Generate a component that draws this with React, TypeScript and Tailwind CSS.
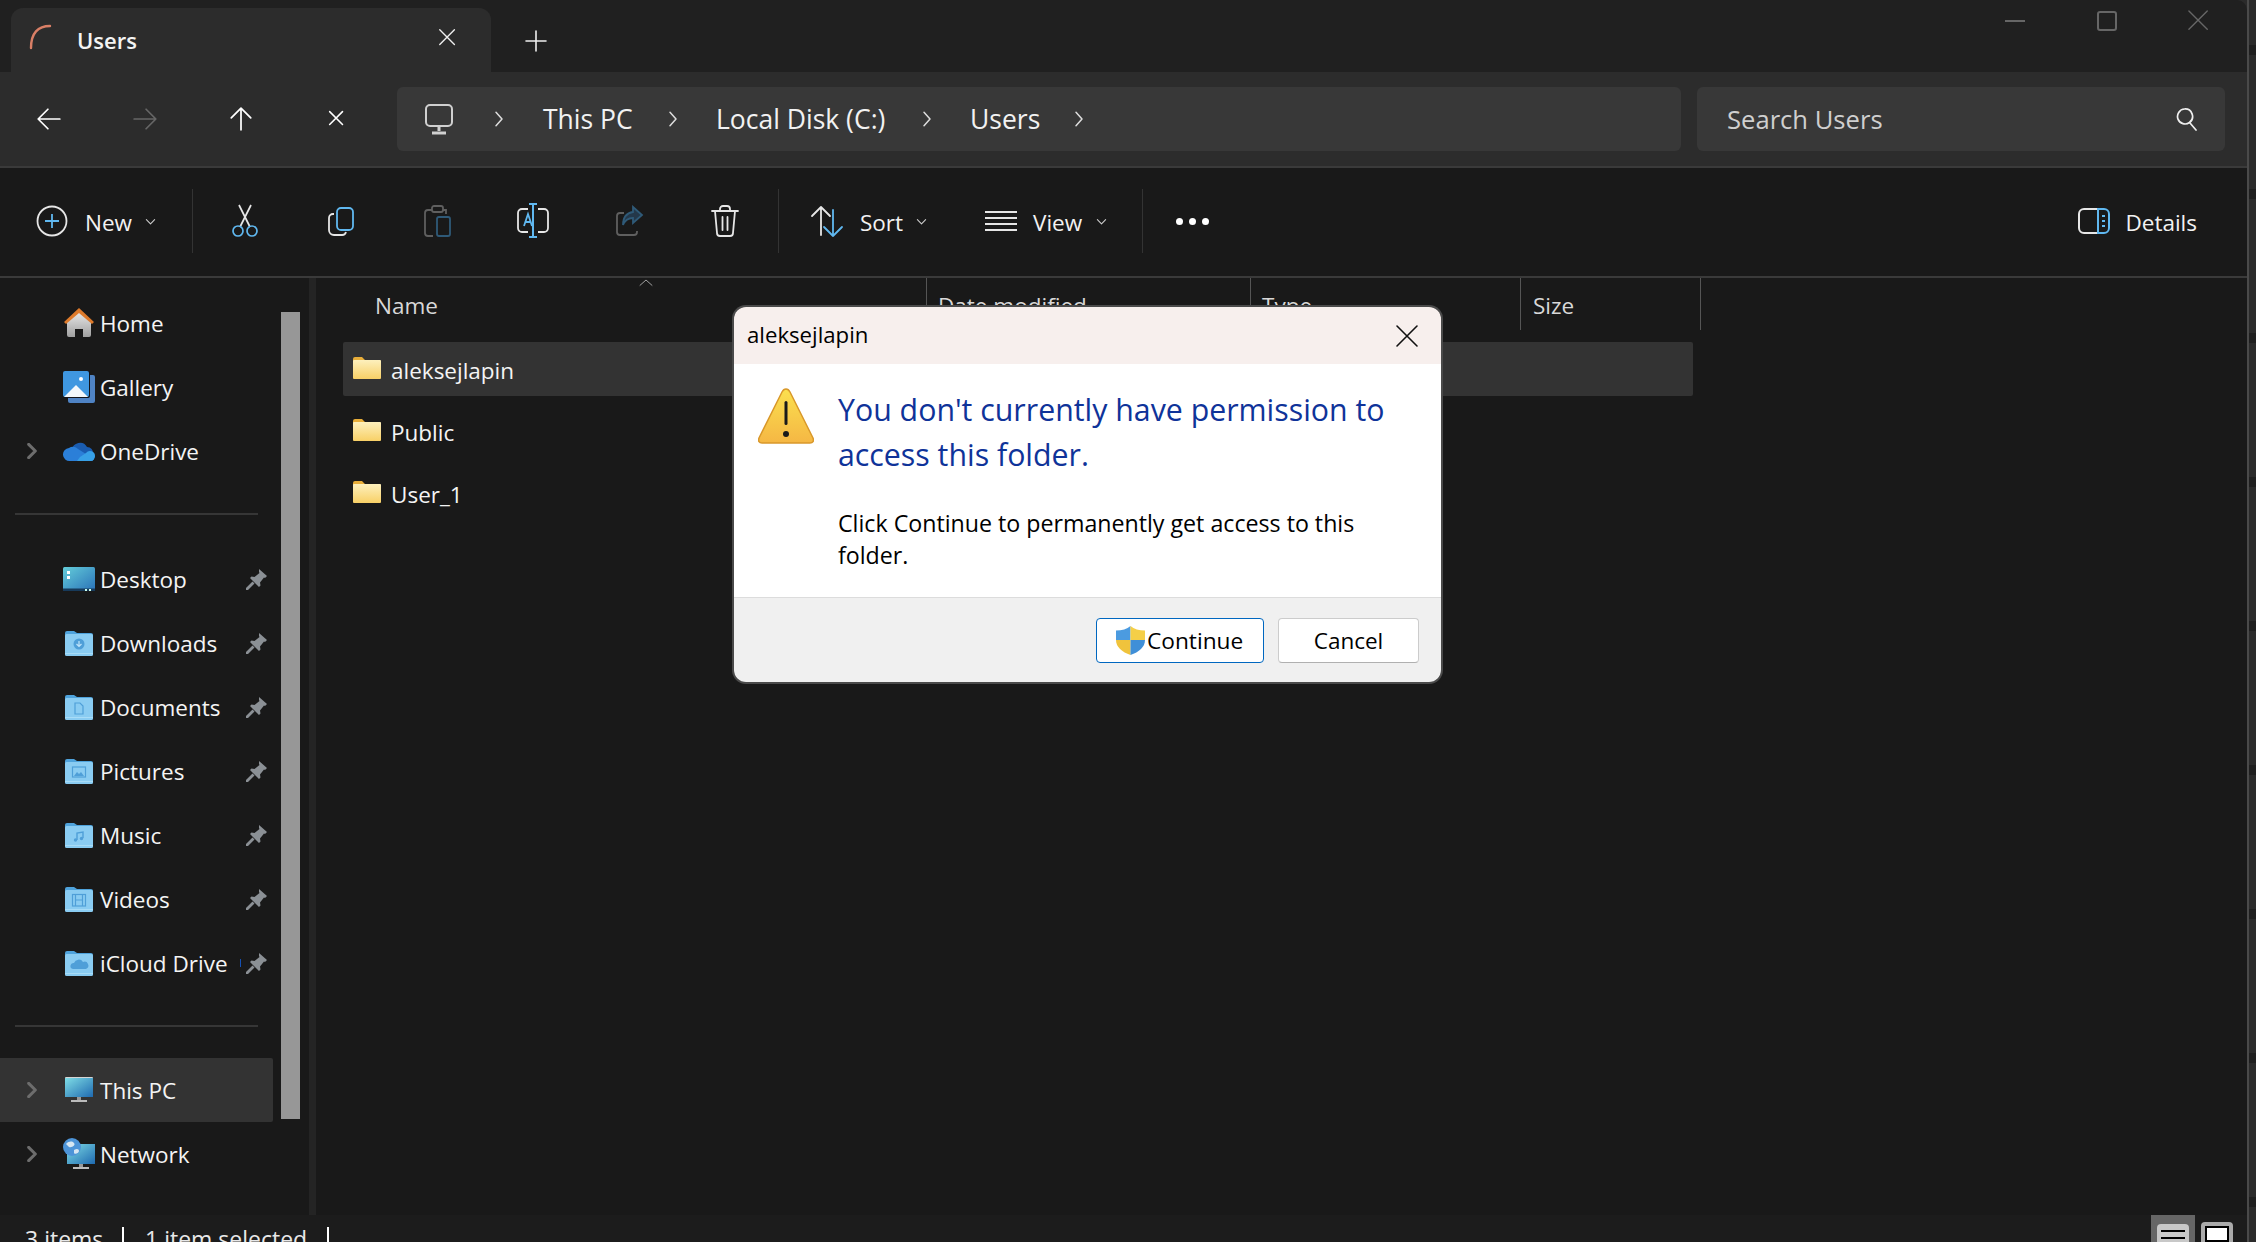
import React from "react";

const Line = ({ d, c = "#fff", w = 1.6, s = 24 }: { d: string; c?: string; w?: number; s?: number }) => (
  <svg width={s} height={s} viewBox="0 0 24 24" fill="none" stroke={c} strokeWidth={w} strokeLinecap="round" strokeLinejoin="round">
    <path d={d} />
  </svg>
);

const Chevron = ({ c = "#ddd" }: { c?: string }) => <Line s={18} c={c} w={2} d="M8 3l8 9-8 9" />;
const Small = () => <Line s={11} c="#ccc" w={2.4} d="M3 8l9 9 9-9" />;

const Slot = ({ w, children }: { w: string; children: React.ReactNode }) => (
  <div className={`${w} flex items-center justify-center shrink-0`}>{children}</div>
);

const Spinner = () => (
  <svg width="24" height="26" viewBox="0 0 24 26" fill="none" stroke="#d97f66" strokeWidth="2.4" strokeLinecap="round">
    <path d="M22 2C10 2 3 9 3 24" />
  </svg>
);

const Monitor = () => (
  <svg width="30" height="32" viewBox="0 0 30 32" fill="none" stroke="#d0d0d0" strokeWidth="2">
    <rect x="2" y="2" width="26" height="21" rx="4" />
    <path d="M15 23v5M8 30h14" strokeWidth="3" />
  </svg>
);

const Sep = () => <div className="w-[1px] h-[64px] bg-[#333333] shrink-0" />;

const Cut = () => (
  <svg width="28" height="34" viewBox="0 0 28 34" fill="none" strokeWidth="1.7">
    <path d="M20 1L9 23M8 1l11 22" stroke="#e6e6e6" />
    <circle cx="7" cy="27" r="5" stroke="#60b8f0" />
    <circle cx="21" cy="27" r="5" stroke="#60b8f0" />
  </svg>
);
const Copy = () => (
  <svg width="30" height="30" viewBox="0 0 30 30" fill="none" strokeWidth="1.8">
    <rect x="11" y="2" width="16" height="22" rx="4" stroke="#60b8f0" />
    <path d="M8 8H7a4 4 0 0 0-4 4v12a5 5 0 0 0 5 5h8a4 4 0 0 0 4-3" stroke="#e6e6e6" />
  </svg>
);
const Paste = () => (
  <svg width="30" height="34" viewBox="0 0 30 34" fill="none" strokeWidth="1.8">
    <path d="M10 6H6a3 3 0 0 0-3 3v20a3 3 0 0 0 3 3h5M21 6h3v4" stroke="#5f5f5f" />
    <rect x="10" y="2" width="11" height="6" rx="2" stroke="#5f5f5f" />
    <rect x="15" y="13" width="13" height="19" rx="2" stroke="#2f5a78" />
  </svg>
);
const Rename = () => (
  <svg width="34" height="36" viewBox="0 0 34 36" fill="none" strokeWidth="1.8">
    <path d="M12 6H6a4 4 0 0 0-4 4v15a4 4 0 0 0 4 4h6M22 6h6a4 4 0 0 1 4 4v15a4 4 0 0 1-4 4h-6" stroke="#e6e6e6" />
    <path d="M13 1h8M17 1v33M13 34h8" stroke="#60b8f0" strokeWidth="2" />
    <path d="M8 23l4-12 4 12M9.5 19h5" stroke="#60b8f0" />
  </svg>
);
const Share = () => (
  <svg width="30" height="34" viewBox="0 0 30 34" fill="none" strokeWidth="1.8">
    <path d="M10 9H6a3 3 0 0 0-3 3v16a3 3 0 0 0 3 3h14a3 3 0 0 0 3-3v-1" stroke="#5f5f5f" />
    <path d="M19 3l9 8-9 8v-5c-5 0-8 2-10 7 0-7 3-12 10-13V3z" stroke="#2f5a78" fill="#24384a" />
  </svg>
);
const Trash = () => (
  <svg width="30" height="34" viewBox="0 0 30 34" fill="none" stroke="#e6e6e6" strokeWidth="1.8" strokeLinecap="round">
    <path d="M2 7h26M10 7V5a3 3 0 0 1 3-3h4a3 3 0 0 1 3 3v2M5 7l2 22a3 3 0 0 0 3 3h10a3 3 0 0 0 3-3l2-22M12.500 13v13M17.500 13v13" />
  </svg>
);
const SortIcon = () => (
  <svg width="34" height="34" viewBox="0 0 34 34" fill="none" strokeWidth="1.8" strokeLinecap="round" strokeLinejoin="round">
    <path d="M11 31V3M2 12l9-9 9 9" stroke="#e6e6e6" />
    <path d="M23 6v26M14 23l9 9 9-9" stroke="#60b8f0" />
  </svg>
);
const ViewIcon = () => (
  <svg width="34" height="24" viewBox="0 0 34 24" fill="none" stroke="#e6e6e6" strokeWidth="2">
    <path d="M1 3h32M1 9h32M1 15h32M1 21h32" />
  </svg>
);
const DetailsIcon = () => (
  <svg width="32" height="26" viewBox="0 0 32 26" fill="none" strokeWidth="2">
    <path d="M20 1H6a5 5 0 0 0-5 5v14a5 5 0 0 0 5 5h14" stroke="#e6e6e6" />
    <path d="M20 1h6a5 5 0 0 1 5 5v14a5 5 0 0 1-5 5h-6V1z" stroke="#60b8f0" />
    <path d="M24 8h3M24 13h3M24 18h3" stroke="#60b8f0" />
  </svg>
);
const NewIcon = () => (
  <svg width="32" height="32" viewBox="0 0 32 32" fill="none" strokeWidth="1.8">
    <circle cx="16" cy="16" r="14.500" stroke="#e6e6e6" />
    <path d="M16 9v14M9 16h14" stroke="#60b8f0" />
  </svg>
);

const Home = () => (
  <svg width="32" height="32" viewBox="0 0 32 32">
    <defs>
      <linearGradient id="hb" x1="0" y1="0" x2="0" y2="1">
        <stop offset="0" stopColor="#e8e8e8" />
        <stop offset="1" stopColor="#a0a0a0" />
      </linearGradient>
    </defs>
    <path d="M4 15L16 5l12 10v13a2 2 0 0 1-2 2h-6v-8h-8v8H6a2 2 0 0 1-2-2z" fill="url(#hb)" />
    <path d="M1 15L16 1l15 14-2 2L16 6 3 17z" fill="#dd7a2b" />
  </svg>
);
const Gallery = () => (
  <svg width="32" height="32" viewBox="0 0 32 32">
    <rect x="5" y="4" width="27" height="28" rx="2" fill="#4f83c4" />
    <rect x="0" y="0" width="27" height="27" rx="2" fill="#10131a" />
    <rect x="0" y="0" width="26" height="26" rx="2" fill="#3f97e0" />
    <path d="M1 26l12-12 12 12z" fill="#f2f7fb" />
    <circle cx="18" cy="8" r="2" fill="#fff" />
  </svg>
);
const OneDrive = () => (
  <svg width="32" height="22" viewBox="0 0 32 22">
    <path d="M9 10a8 8 0 0 1 15-3 6 6 0 0 1 6 7H9z" fill="#1a5cb0" />
    <path d="M7 21a6.500 6.500 0 0 1-1-13 7 7 0 0 1 9 1l8 5 9 2c-.5 3-2 5-4 5z" fill="#2b7fd8" />
    <path d="M14 21h14c2 0 3.500-2 4-5a5 5 0 0 0-9-3l-6 4z" fill="#37a0e6" />
  </svg>
);
const Desktop = () => (
  <svg width="32" height="24" viewBox="0 0 32 24">
    <defs>
      <linearGradient id="db" x1="0" y1="0" x2="1" y2="1">
        <stop offset="0" stopColor="#64cdda" />
        <stop offset="1" stopColor="#2a72b8" />
      </linearGradient>
    </defs>
    <rect width="32" height="24" rx="1.500" fill="url(#db)" />
    <rect y="21.500" width="32" height="2.500" fill="#173a5a" />
    <rect x="4" y="4" width="3" height="3" fill="#fff" />
    <rect x="4" y="9" width="3" height="3" fill="#fff" />
    <rect x="22" y="22" width="2" height="2" fill="#cfe" />
    <rect x="26" y="22" width="2" height="2" fill="#cfe" />
  </svg>
);
const BlueFolder = ({ children }: { children?: React.ReactNode }) => (
  <svg width="28" height="25" viewBox="0 0 28 25">
    <path d="M0 2a2 2 0 0 1 2-2h7l3 2h14a2 2 0 0 1 2 2v6H0z" fill="#4fa3dc" />
    <rect y="3" width="28" height="22" rx="1.500" fill="#8accf2" />
    <rect y="22" width="28" height="1" fill="#a8dcf7" />
    {children}
  </svg>
);
const Pin = () => (
  <svg width="21" height="21" viewBox="0 0 21 21" fill="#8b9095">
    <path d="M13 0l8 7-2 2-1-.5-4 5 .5 3-1.500 1.500L4 9l1.500-1.500 3 .5 5-4-.5-1z" />
    <path d="M6.500 12.500l2 2L2 21H0v-2z" />
  </svg>
);
const PC = () => (
  <svg width="28" height="26" viewBox="0 0 28 26">
    <defs>
      <linearGradient id="pc" x1="0" y1="0" x2="1" y2="1">
        <stop offset="0" stopColor="#7fdde6" />
        <stop offset="1" stopColor="#1f6ab0" />
      </linearGradient>
    </defs>
    <rect width="28" height="20" fill="#d5d5d5" rx="1" />
    <rect width="28" height="19" y="1" fill="url(#pc)" />
    <rect x="12" y="20" width="4" height="3" fill="#999" />
    <rect x="6" y="23" width="16" height="2" fill="#bbb" />
  </svg>
);
const NetworkIcon = () => (
  <svg width="32" height="32" viewBox="0 0 32 32">
    <defs>
      <linearGradient id="nw" x1="0" y1="0" x2="1" y2="1">
        <stop offset="0" stopColor="#7fdde6" />
        <stop offset="1" stopColor="#1f6ab0" />
      </linearGradient>
    </defs>
    <rect x="4" y="6" width="28" height="20" fill="url(#nw)" />
    <rect x="16" y="26" width="4" height="3" fill="#999" />
    <rect x="10" y="29" width="16" height="2" fill="#bbb" />
    <circle cx="9" cy="9" r="9" fill="#4d94d8" />
    <path d="M3 6c3-3 6-3 8-1s-2 5-5 4zM11 12c3-2 5-1 5 1s-4 4-5 2z" fill="#d6e6f2" />
  </svg>
);

const Row = ({ icon, label, chevron, pin, active, clip }: { icon: React.ReactNode; label: string; chevron?: boolean; pin?: boolean; active?: boolean; clip?: boolean }) => (
  <div className={`h-[64px] w-[273px] flex items-center rounded-r-[2px] ${active ? "bg-[#333333]" : ""}`}>
    <div className="w-[63px] pl-[24px] flex items-center shrink-0">
      {chevron && <Line s={16} c="#6d6d6d" w={4.5} d="M7 2l10 10-10 10" />}
    </div>
    <div className="w-[32px] flex justify-center shrink-0">{icon}</div>
    <span className="ml-[5px] mt-[2px] text-[#f4f4f4] whitespace-nowrap">{label}</span>
    {clip && <span className="ml-auto w-[1px] h-[8px] bg-[#1450b4]" />}
    {pin && <span className={`${clip ? "ml-[5px]" : "ml-auto"} mr-[6px] flex`}><Pin /></span>}
  </div>
);

const YellowFolder = () => (
  <svg width="28" height="22" viewBox="0 0 28 22">
    <defs>
      <linearGradient id="yf" x1="0" y1="0" x2="0" y2="1">
        <stop offset="0" stopColor="#fdf0bd" />
        <stop offset="1" stopColor="#f8d066" />
      </linearGradient>
    </defs>
    <path d="M0 2a2 2 0 0 1 2-2h7l3 3h14a2 2 0 0 1 2 2v4H0z" fill="#e8ae3a" />
    <rect y="3" width="28" height="19" rx="1" fill="url(#yf)" />
  </svg>
);

const FileRow = ({ name, active }: { name: string; active?: boolean }) => (
  <div className={`h-[54px] w-[1350px] mb-[8px] flex items-center pl-[10px] rounded-[2px] ${active ? "bg-[#333333]" : ""}`}>
    <span className="flex -mt-[3px]"><YellowFolder /></span>
    <span className="ml-[10px] mt-[4px] text-[#f4f4f4]">{name}</span>
  </div>
);

const Warning = () => (
  <svg width="56" height="56" viewBox="0 0 56 56">
    <defs>
      <linearGradient id="wg" x1="0" y1="0" x2="0" y2="1">
        <stop offset="0" stopColor="#fbe04f" />
        <stop offset="1" stopColor="#f5b744" />
      </linearGradient>
    </defs>
    <path d="M28 1c2 0 3 1 4 3l23 46c1 3 0 5-3 5H4c-3 0-4-2-3-5L24 4c1-2 2-3 4-3z" fill="url(#wg)" stroke="#d9982b" strokeWidth="1.500" />
    <rect x="26.500" y="13" width="3" height="24" rx="1.500" fill="#1a1a1a" />
    <circle cx="28" cy="46" r="3" fill="#1a1a1a" />
  </svg>
);

const Shield = () => (
  <svg width="29" height="29" viewBox="0 0 29 29">
    <path d="M14.500 0C11 3 6 4.500 0 4.500V14h14.500z" fill="#4b9be0" />
    <path d="M14.500 0C18 3 23 4.500 29 4.500V14H14.500z" fill="#f5cf47" />
    <path d="M0 14c0 7 6 12 14.500 15V14z" fill="#f0c33c" />
    <path d="M29 14c0 7-6 12-14.500 15V14z" fill="#3f8fd8" />
  </svg>
);

const stripBars = [0, 1, 2, 3, 4, 5, 6, 7, 8];

export default function App() {
  return (
    <div className="relative w-[2256px] h-[1242px] overflow-hidden flex bg-[#2b2b2b] font-['Open_Sans',sans-serif] text-[22.5px] leading-none text-white">
      <div className="w-[2247px] h-full flex flex-col shrink-0 rounded-tr-[10px] overflow-hidden">
        {/* Tabs */}
        <div className="h-[72px] bg-[#202020] flex items-end pl-[11px] shrink-0 relative">
          <div className="w-[480px] h-[64px] bg-[#2c2c2c] rounded-t-[12px] flex items-center pl-[17px] pb-[3px]">
            <span className="flex -mt-[4px]"><Spinner /></span>
            <span className="ml-[25px] mt-[2px] font-semibold text-[22px] text-[#f4f4f4]">Users</span>
            <span className="ml-auto mr-[32px] flex -mt-[2px]"><Line s={22} d="M3 3l16 16M19 3L3 19" c="#eee" w={1.5} /></span>
          </div>
          <div className="ml-[33px] pb-[19px] flex"><Line s={24} c="#eee" w={1.6} d="M12 2v20M2 12h20" /></div>
          <div className="ml-auto self-start mt-[10px] mr-[2px] flex items-center">
            <Slot w="w-[92px]"><div className="w-[20px] h-[2px] bg-[#666666]" /></Slot>
            <Slot w="w-[92px]"><div className="w-[20px] h-[20px] border-2 border-[#666666] rounded-[3px]" /></Slot>
            <Slot w="w-[92px]"><Line s={22} d="M1 1l20 20M21 1L1 21" c="#666666" w={1.5} /></Slot>
          </div>
        </div>

        {/* Address */}
        <div className="h-[96px] bg-[#2c2c2c] border-b-2 border-[#3a3a3a] flex items-center pl-[1px] pb-[1px] shrink-0">
          <Slot w="w-[96px]"><Line s={26} d="M22 12H3M11 3l-9 9 9 9" /></Slot>
          <Slot w="w-[96px]"><Line s={26} c="#666" d="M2 12h19M13 3l9 9-9 9" /></Slot>
          <Slot w="w-[96px]"><Line s={26} d="M12 22V3M3 11l9-9 9 9" /></Slot>
          <Slot w="w-[96px]"><Line s={22} d="M4 4l14 14M18 4L4 18" w={1.7} /></Slot>
          <div className="ml-[12px] w-[1284px] h-[64px] bg-[#383838] rounded-[6px] flex items-center text-[#f2f2f2] text-[26.500px]">
            <span className="ml-[27px] flex"><Monitor /></span>
            <span className="ml-[36px] flex"><Chevron /></span>
            <span className="ml-[35px] mt-[2px] w-[90px] whitespace-nowrap">This PC</span>
            <span className="ml-[31px] flex"><Chevron /></span>
            <span className="ml-[34px] mt-[2px] w-[170px] whitespace-nowrap">Local Disk (C:)</span>
            <span className="ml-[32px] flex"><Chevron /></span>
            <span className="ml-[34px] mt-[2px] w-[67px]">Users</span>
            <span className="ml-[33px] flex"><Chevron /></span>
          </div>
          <div className="ml-[16px] w-[528px] h-[64px] bg-[#383838] rounded-[6px] flex items-center pl-[30px] pr-[26px] justify-between">
            <span className="text-[#cfcfcf] text-[25.600px] mt-[3px]">Search Users</span>
            <Line s={24} c="#eee" w={1.7} d="M14.500 15.500A7.500 7.500 0 1 1 9.500 2a7.500 7.500 0 0 1 5 13.500zM15 16l6 7" />
          </div>
        </div>

        {/* Toolbar */}
        <div className="h-[110px] bg-[#191919] border-b-2 border-[#3a3a3a] flex items-center shrink-0 pb-[2px]">
          <span className="ml-[36px] flex"><NewIcon /></span>
          <span className="ml-[17px] w-[49px] text-[#f2f2f2] mt-[5px]">New</span>
          <span className="ml-[11px] flex"><Small /></span>
          <span className="ml-[36px] flex"><Sep /></span>
          <Slot w="w-[4px]"><span /></Slot>
          <Slot w="w-[96px]"><Cut /></Slot>
          <Slot w="w-[96px]"><Copy /></Slot>
          <Slot w="w-[96px]"><Paste /></Slot>
          <Slot w="w-[96px]"><Rename /></Slot>
          <Slot w="w-[96px]"><Share /></Slot>
          <Slot w="w-[96px]"><Trash /></Slot>
          <span className="ml-[5px] flex"><Sep /></span>
          <span className="ml-[31px] flex"><SortIcon /></span>
          <span className="ml-[16px] w-[44px] text-[#f2f2f2] mt-[5px]">Sort</span>
          <span className="ml-[12px] flex"><Small /></span>
          <span className="ml-[57px] flex"><ViewIcon /></span>
          <span className="ml-[15px] w-[51px] text-[#f2f2f2] mt-[5px]">View</span>
          <span className="ml-[12px] flex"><Small /></span>
          <span className="ml-[35px] flex"><Sep /></span>
          <span className="ml-[33px] flex gap-[6px]">
            <i className="w-[7px] h-[7px] rounded-full bg-white" />
            <i className="w-[7px] h-[7px] rounded-full bg-white" />
            <i className="w-[7px] h-[7px] rounded-full bg-white" />
          </span>
          <span className="ml-auto flex"><DetailsIcon /></span>
          <span className="ml-[15px] mr-[50px] text-[#f2f2f2] mt-[5px]">Details</span>
        </div>

        {/* Body */}
        <div className="flex-1 min-h-0 flex bg-[#191919]">
          <div className="w-[309px] shrink-0 flex">
            <div className="w-[273px] pt-[13px] shrink-0">
              <Row icon={<Home />} label="Home" />
              <Row icon={<Gallery />} label="Gallery" />
              <Row icon={<OneDrive />} label="OneDrive" chevron />
              <div className="mx-[15px] w-[243px] h-[2px] bg-[#363636] mt-[30px] mb-[32px]" />
              <Row icon={<Desktop />} label="Desktop" pin />
              <Row label="Downloads" pin icon={<BlueFolder><circle cx="14" cy="13" r="5.500" fill="#4f9fd8" /><path d="M14 10v5M11.500 13l2.500 2.500 2.500-2.500" stroke="#bfe4fa" strokeWidth="1.200" fill="none" /></BlueFolder>} />
              <Row label="Documents" pin icon={<BlueFolder><path d="M10 8h5l3 3v8h-8z" fill="none" stroke="#4f9fd8" strokeWidth="1.200" /></BlueFolder>} />
              <Row label="Pictures" pin icon={<BlueFolder><rect x="7.500" y="8" width="13" height="10" fill="none" stroke="#4f9fd8" strokeWidth="1.200" /><path d="M9 17l3-4 2 2 2-2 3 4z" fill="#4f9fd8" /></BlueFolder>} />
              <Row label="Music" pin icon={<BlueFolder><path d="M12 17V10l6-1v6" fill="none" stroke="#4f9fd8" strokeWidth="1.400" /><circle cx="10.500" cy="17" r="1.700" fill="#4f9fd8" /><circle cx="16.500" cy="15.500" r="1.700" fill="#4f9fd8" /></BlueFolder>} />
              <Row label="Videos" pin icon={<BlueFolder><rect x="7.500" y="7.500" width="13" height="11.500" fill="none" stroke="#4f9fd8" strokeWidth="1.200" /><path d="M10.500 7.500v11.500M17.500 7.500v11.500M10.500 13h7" stroke="#4f9fd8" strokeWidth="1.200" /></BlueFolder>} />
              <Row label="iCloud Drive" pin clip icon={<BlueFolder><path d="M8 18a3 3 0 0 1 1-6 5 5 0 0 1 9-1 3.500 3.500 0 0 1 3 7z" fill="#4f9fd8" /></BlueFolder>} />
              <div className="mx-[15px] w-[243px] h-[2px] bg-[#363636] mt-[30px] mb-[31px]" />
              <Row icon={<PC />} label="This PC" chevron active />
              <Row icon={<NetworkIcon />} label="Network" chevron />
            </div>
            <div className="w-[19px] ml-[8px] mt-[34px] h-[807px] bg-[#979797] shrink-0" />
          </div>
          <div className="w-[7px] bg-[#242424] shrink-0" />
          <div className="flex-1 min-w-0 relative">
            <div className="h-[52px] flex text-[#d8d8d8]">
              <div className="w-[611px] pl-[59px] pt-[17px] border-r border-[#555555]">Name</div>
              <div className="w-[324px] pl-[11px] pt-[17px] border-r border-[#555555]">Date modified</div>
              <div className="w-[270px] pl-[11px] pt-[17px] border-r border-[#555555]">Type</div>
              <div className="w-[180px] pl-[12px] pt-[17px] border-r border-[#555555]">Size</div>
            </div>
            <span className="absolute left-[322px] top-0 flex"><Line s={16} c="#aaa" w={1.4} d="M3 11l9-8 9 8" /></span>
            <div className="pt-[12px] pl-[27px]">
              <FileRow name="aleksejlapin" active />
              <FileRow name="Public" />
              <FileRow name="User_1" />
            </div>
          </div>
        </div>

        {/* Status */}
        <div className="h-[27px] bg-[#1c1c1c] overflow-hidden flex shrink-0 relative text-[#e8e8e8] text-[23px] pl-[25px]">
          <span className="mt-[13px] w-[97px]">3 items</span>
          <i className="mt-[12px] w-[2px] h-[20px] bg-white" />
          <span className="ml-[21px] mt-[13px] w-[182px] whitespace-nowrap">1 item selected</span>
          <i className="mt-[12px] w-[2px] h-[20px] bg-white" />
          <div className="ml-auto w-[44px] h-[27px] bg-[#666666] flex justify-center pt-[9px]">
            <div className="w-[32px] h-[24px] rounded-[4px] bg-[#c8c8c8] flex flex-col gap-[5px] pt-[6px] px-[4px]">
              <i className="h-[2px] bg-black" />
              <i className="h-[2px] bg-black" />
            </div>
          </div>
          <div className="ml-[6px] mr-[14px] mt-[7px] w-[32px] h-[24px] rounded-[4px] bg-[#aaaaaa] p-[4px]">
            <div className="w-full h-full border-2 border-black bg-white" />
          </div>
        </div>
      </div>

      {/* Desktop behind the window's right edge */}
      <div className="flex-1 flex flex-col pt-[45px] gap-[134px] border-l-2 border-[#4a4a4a]">
        {stripBars.map((b) => (
          <div key={b} className="h-[10px] bg-[#1f1f1f] shrink-0" />
        ))}
      </div>

      {/* Dialog */}
      <div className="absolute left-[734px] top-[307px] w-[707px] h-[375px] rounded-[12px] overflow-hidden flex flex-col shadow-[0_0_0_2px_#4a4a4a] text-black">
        <div className="h-[57px] bg-[#f7efed] flex items-center pl-[13px] pr-[22px] justify-between">
          <span className="text-[22.200px]">aleksejlapin</span>
          <Line s={24} c="#111" w={1.6} d="M2 2l20 20M22 2L2 22" />
        </div>
        <div className="h-[234px] bg-white flex border-b border-[#dcdcdc] pl-[24px] pt-[24px]">
          <div className="shrink-0"><Warning /></div>
          <div className="ml-[24px] -mt-[1px]">
            <div className="text-[30.300px] leading-[45px] text-[#0f3399] w-[560px]">You don't currently have permission to access this folder.</div>
            <div className="mt-[30px] text-[23.200px] leading-[32px] w-[570px]">Click Continue to permanently get access to this folder.</div>
          </div>
        </div>
        <div className="flex-1 bg-[#f0f0f0] flex items-center justify-end gap-[14px] pr-[22px]">
          <div className="w-[168px] h-[45px] bg-white border border-[#0067c0] rounded-[4px] flex items-center pl-[19px] gap-[2px] text-[22.700px]">
            <Shield />
            <span className="mt-[2px]">Continue</span>
          </div>
          <div className="w-[141px] h-[45px] bg-white border border-[#cccccc] border-b-[#b0b0b0] rounded-[4px] flex items-center justify-center pt-[2px]">Cancel</div>
        </div>
      </div>
    </div>
  );
}
